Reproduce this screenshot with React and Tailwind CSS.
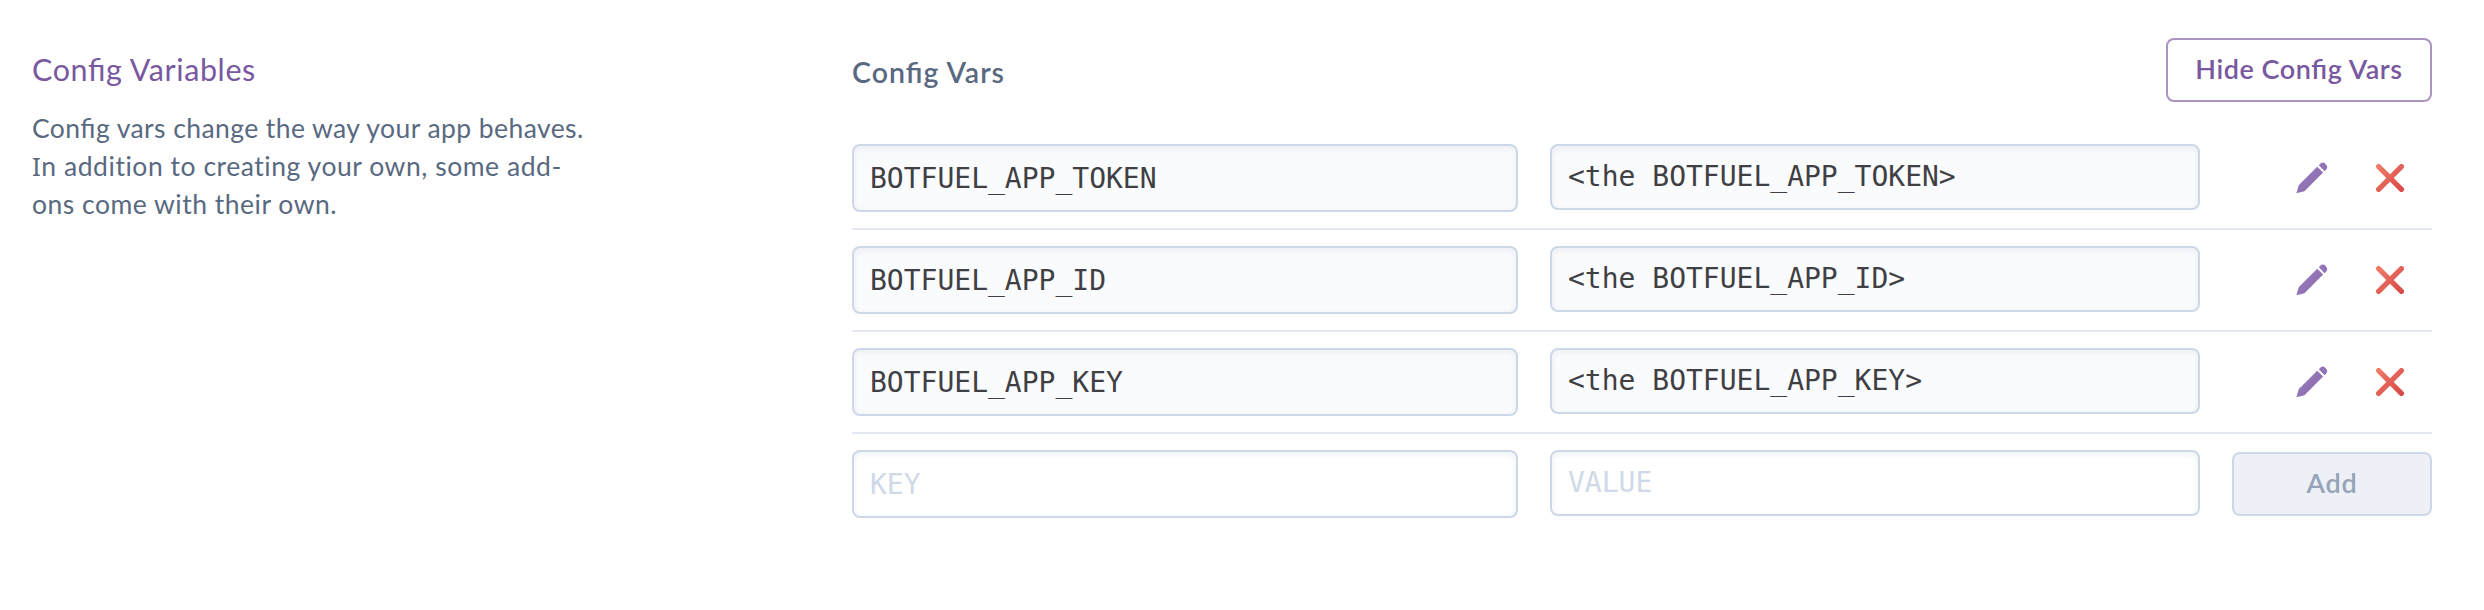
const rows = [
  { name: 'BOTFUEL_APP_TOKEN', value: '<the BOTFUEL_APP_TOKEN>' },
  { name: 'BOTFUEL_APP_ID', value: '<the BOTFUEL_APP_ID>' },
  { name: 'BOTFUEL_APP_KEY', value: '<the BOTFUEL_APP_KEY>' },
];

const fieldBase =
  "min-w-0 rounded-[8px] border-2 border-[#cdd8e7] px-4 font-['DejaVu_Sans_Mono',monospace] text-[28px] leading-[32px] text-[#3f3f44] shadow-[inset_0_2px_6px_rgba(207,215,230,0.4)] outline-none placeholder:text-[#cfd9e7] placeholder:opacity-100";

function PencilIcon() {
  return (
    <svg width="32" height="32" viewBox="0 0 32 32" aria-hidden="true">
      <defs>
        <linearGradient id="pencil-fill" x1="0" y1="0" x2="1" y2="1">
          <stop offset="0" stopColor="#a180c3" />
          <stop offset="1" stopColor="#8266a8" />
        </linearGradient>
      </defs>
      <path
        fill="url(#pencil-fill)"
        d="M0.4 31.3 L2.4 24.2 Q2.7 23.1 3.4 22.4 L21.2 4.7 L27.1 10.6 L9.2 28.4 Q8.4 29.2 7.4 29.5 Z M22.8 3.3 L24.5 1.6 Q27 -0.7 29.6 1.9 Q32.6 4.9 30.2 7.5 L28.6 9.2 Z"
      />
    </svg>
  );
}

function CrossIcon() {
  return (
    <svg width="28" height="28" viewBox="0 0 28 28" aria-hidden="true">
      <defs>
        <linearGradient id="cross-fill" gradientUnits="userSpaceOnUse" x1="0" y1="0" x2="28" y2="28">
          <stop offset="0" stopColor="#f0806a" />
          <stop offset="1" stopColor="#d84444" />
        </linearGradient>
      </defs>
      <path d="M2.6 2.6 L25.4 25.4 M25.4 2.6 L2.6 25.4" stroke="url(#cross-fill)" strokeWidth="5.2" strokeLinecap="round" fill="none" />
    </svg>
  );
}

function Config() {
  return <span className="[font-feature-settings:'liga'_1]">Config</span>;
}

export default function App() {
  return (
    <main className="flex h-[610px] w-[2484px] bg-white pl-8 font-[Lato,sans-serif] text-[#596981]">
      <section className="w-[820px] shrink-0 pt-[49px]">
        <h2 className="text-[30.5px] leading-[40px] tracking-[0.6px] text-[#79589f]">
          <Config /> Variables
        </h2>
        <p className="mt-[20px] w-[570px] text-[26.5px] leading-[38px] tracking-[0.42px]">
          <Config /> vars change the way your app behaves.
          <br />
          <span className="tracking-[0.54px]">
            <span className="font-['Noto_Sans',sans-serif] text-[26px] leading-none">I</span>n addition to creating your own, some add-
          </span>
          <br />
          <span className="tracking-[0.5px]">ons come with their own.</span>
        </p>
      </section>

      <section className="w-[1580px] shrink-0 pt-[38px]">
        <header className="flex h-[64px] items-start justify-between">
          <h3 className="pt-[14px] text-[28.5px] leading-[40px] font-semibold tracking-[1px]">
            <Config /> Vars
          </h3>
          <button className="h-[64px] w-[266px] rounded-[8px] border-2 border-[#ab93c2] pb-[2px] text-[27px] leading-[36px] font-semibold tracking-[0.55px] text-[#79589f]">
            Hide <Config /> Vars
          </button>
        </header>

        <div className="mt-[26px]">
          {rows.map((row) => (
            <div key={row.name} className="flex h-[102px] items-start border-b-2 border-[#e5e9f4] pt-4">
              <input readOnly defaultValue={row.name} className={`${fieldBase} h-[68px] w-[666px] bg-[#fafbfd]`} />
              <input readOnly defaultValue={row.value} className={`${fieldBase} ml-8 h-[66px] w-[650px] bg-[#fafbfd] pb-[2px]`} />
              <div className="flex h-[68px] flex-1 items-center justify-end gap-12 pr-7">
                <PencilIcon />
                <CrossIcon />
              </div>
            </div>
          ))}
          <div className="flex items-start pt-4">
            <input placeholder="KEY" className={`${fieldBase} h-[68px] w-[666px] bg-white`} />
            <input placeholder="VALUE" className={`${fieldBase} ml-8 h-[66px] w-[650px] bg-white pb-[2px]`} />
            <button className="mt-[2px] ml-8 h-[64px] w-[200px] rounded-[8px] border-2 border-[#cdd8e7] bg-[#edf0f6] pb-[2px] text-[27px] leading-[36px] font-semibold tracking-[0.7px] text-[#96a3b6]">
              Add
            </button>
          </div>
        </div>
      </section>
    </main>
  );
}
